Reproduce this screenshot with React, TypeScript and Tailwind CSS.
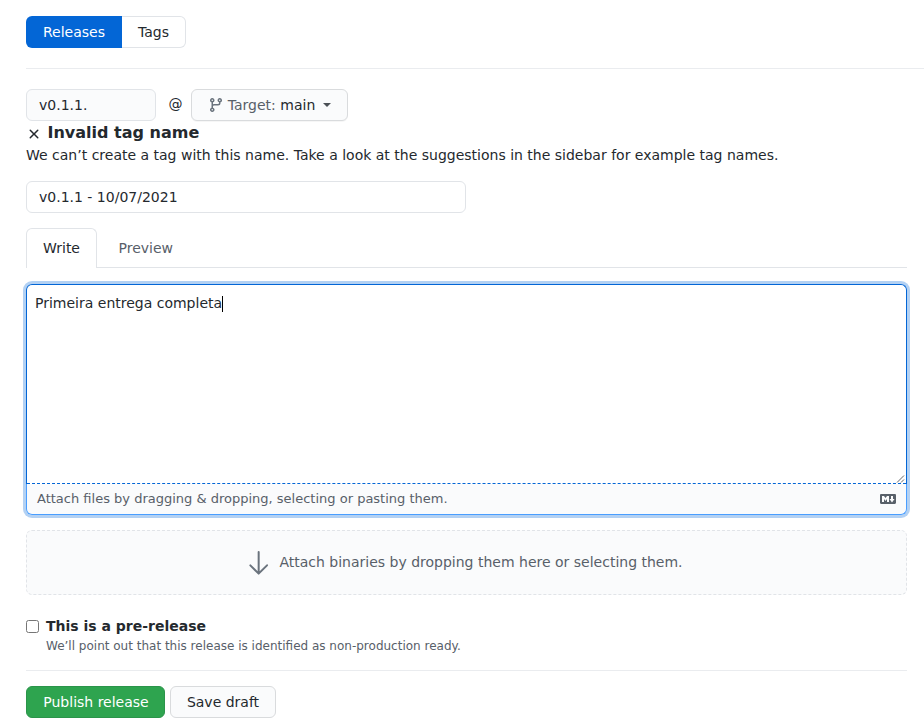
import React from "react";

function BranchIcon() {
  return (
    <svg className="h-4 w-4 shrink-0 fill-[#6a737d]" viewBox="0 0 16 16">
      <path
        fillRule="evenodd"
        d="M11.75 2.5a.75.75 0 100 1.5.75.75 0 000-1.5zm-2.25.75a2.25 2.25 0 113 2.122V6A2.5 2.5 0 0110 8.5H6a1 1 0 00-1 1v1.128a2.251 2.251 0 11-1.5 0V5.372a2.25 2.25 0 111.5 0v1.836A2.492 2.492 0 016 7h4a1 1 0 001-1v-.628A2.25 2.25 0 019.5 3.25zM4.25 12a.75.75 0 100 1.5.75.75 0 000-1.5zM3.5 3.25a.75.75 0 111.5 0 .75.75 0 01-1.5 0z"
      />
    </svg>
  );
}

function CloseIcon() {
  return (
    <svg className="mt-[5px] h-4 w-4 shrink-0 fill-[#24292e]" viewBox="0 0 16 16">
      <path
        fillRule="evenodd"
        d="M3.72 3.72a.75.75 0 011.06 0L8 6.94l3.22-3.22a.75.75 0 111.06 1.06L9.06 8l3.22 3.22a.75.75 0 11-1.06 1.06L8 9.06l-3.22 3.22a.75.75 0 01-1.06-1.06L6.94 8 3.72 4.78a.75.75 0 010-1.06z"
      />
    </svg>
  );
}

function MarkdownIcon() {
  return (
    <svg className="h-4 w-4 shrink-0 fill-[#586069]" viewBox="0 0 16 16">
      <path
        fillRule="evenodd"
        d="M14.85 3H1.15C.52 3 0 3.52 0 4.15v7.69C0 12.48.52 13 1.15 13h13.69c.64 0 1.15-.52 1.15-1.15v-7.7C16 3.52 15.48 3 14.85 3zM9 11H7V8L5.5 9.92 4 8v3H2V5h2l1.5 2L7 5h2v6zm2.99.5L9.5 8H11V5h2v3h1.5l-2.51 3.5z"
      />
    </svg>
  );
}

function ArrowDownIcon() {
  return (
    <svg className="h-8 w-8 shrink-0 fill-[#6a737d]" viewBox="0 0 24 24">
      <path
        fillRule="evenodd"
        d="M4.97 13.22a.75.75 0 000 1.06l6.25 6.25a.75.75 0 001.06 0l6.25-6.25a.75.75 0 10-1.06-1.06l-4.97 4.97V3.75a.75.75 0 00-1.5 0v14.44l-4.97-4.97a.75.75 0 00-1.06 0z"
      />
    </svg>
  );
}

export default function App() {
  return (
    <div className="h-[722px] w-full overflow-hidden bg-white pl-[26px] pt-4 font-['DejaVu_Sans',sans-serif] text-[14px] leading-5 text-[#24292e]">
      <nav className="flex h-8">
        <a className="flex w-24 items-center justify-center rounded-l-md bg-[#0366d6] text-white">Releases</a>
        <a className="flex w-16 items-center justify-center rounded-r-md border border-l-0 border-[#e1e4e8]">Tags</a>
      </nav>
      <hr className="mt-5 border-[#eaecef]" />

      <div className="w-[881px]">
        <div className="mt-5 flex h-8 items-center">
          <div className="flex h-8 w-[130px] items-center rounded-md border border-[#e1e4e8] bg-[#fafbfc] px-3">v0.1.1.</div>
          <span className="ml-[12.5px] w-[22.5px] pb-0.5 text-[14px]">@</span>
          <button className="flex h-8 w-[157px] items-center rounded-md border border-[#d9dbdd] bg-[#fafbfc] pl-4 shadow-[0_1px_0_rgba(27,31,35,0.04)]">
            <BranchIcon />
            <span className="ml-[3.8px] whitespace-pre font-normal text-[#586069]">Target: <span className="text-[#24292e]">main</span></span>
            <span className="ml-2 border-x-4 border-t-4 border-x-transparent border-t-[#4b5056]" />
          </button>
        </div>

        <div className="flex h-6 items-start">
          <CloseIcon />
          <h4 className="ml-[5.5px] text-[16px] font-bold leading-6">Invalid tag name</h4>
        </div>
        <p className="leading-5">We can’t create a tag with this name. Take a look at the suggestions in the sidebar for example tag names.</p>

        <div className="mt-4 flex h-8 w-[440px] items-center rounded-md border border-[#e1e4e8] px-3">v0.1.1 - 10/07/2021</div>

        <div className="mt-[15px] flex h-10 border-b border-[#e1e4e8]">
          <div className="flex h-10 w-[71px] items-center justify-center rounded-t-md border border-b-0 border-[#e1e4e8] bg-white pb-0.5">Write</div>
          <div className="ml-[21.5px] flex h-10 items-center text-[#586069]">Preview</div>
        </div>

        <div className="mt-4 rounded-md shadow-[0_0_0_3px_rgba(3,102,214,0.3)]">
          <div className="relative h-[200px] rounded-t-md border border-b-0 border-[#0366d6] pl-2 pt-2">
            <div className="flex items-center">
              <span className="leading-[21px]">Primeira entrega completa</span>
              <span className="h-4 w-px bg-black" />
            </div>
            <svg className="absolute bottom-[1px] right-[1px] h-[9px] w-[9px] stroke-[#555555]" viewBox="0 0 9 9">
              <path d="M1 8.5L8 1.5M5 8.5L8 5.5" fill="none" strokeWidth="0.9" />
            </svg>
            <div className="absolute inset-x-0 bottom-0 border-b border-dashed border-[#0366d6]" />
          </div>
          <div className="flex h-[31px] items-center justify-between rounded-b-md border border-t-0 border-[#4a9eff] bg-[#fafbfc] px-2.5 text-[13px] text-[#586069]">
            <span>Attach files by dragging &amp; dropping, selecting or pasting them.</span>
            <MarkdownIcon />
          </div>
        </div>

        <div className="mt-[15px] flex h-[65px] items-center justify-center rounded-md border border-dashed border-[#e1e4e8] bg-[#fafbfc] pr-[7px] text-[#586069]">
          <ArrowDownIcon />
          <span className="ml-1 pb-0.5">Attach binaries by dropping them here or selecting them.</span>
        </div>

        <div className="mt-[21px] flex">
          <input type="checkbox" className="mt-1 h-[13px] w-[13px] shrink-0" />
          <div className="ml-[7px]">
            <div className="font-bold leading-[21px]">This is a pre-release</div>
            <div className="text-[12px] leading-[18px] text-[#586069]">We’ll point out that this release is identified as non-production ready.</div>
          </div>
        </div>

        <hr className="mt-[15px] border-[#eaecef]" />

        <div className="mt-[15px] flex gap-[5px]">
          <button className="h-8 w-[139px] rounded-md border border-[#2b944a] bg-[#2ea44f] pl-px text-white">Publish release</button>
          <button className="h-8 w-[106px] rounded-md border border-[#d9dbdd] bg-[#fafbfc]">Save draft</button>
        </div>
      </div>
    </div>
  );
}
